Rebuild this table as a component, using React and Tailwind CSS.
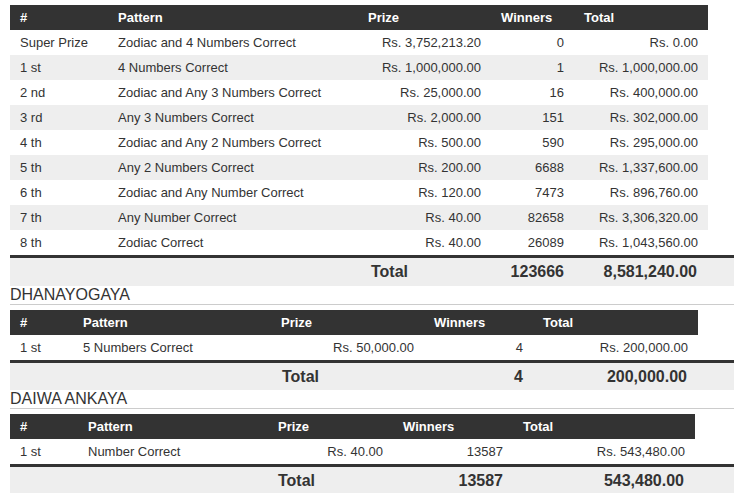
const t1 = [
  ['Super Prize', 'Zodiac and 4 Numbers Correct', 'Rs. 3,752,213.20', '0', 'Rs. 0.00'],
  ['1 st', '4 Numbers Correct', 'Rs. 1,000,000.00', '1', 'Rs. 1,000,000.00'],
  ['2 nd', 'Zodiac and Any 3 Numbers Correct', 'Rs. 25,000.00', '16', 'Rs. 400,000.00'],
  ['3 rd', 'Any 3 Numbers Correct', 'Rs. 2,000.00', '151', 'Rs. 302,000.00'],
  ['4 th', 'Zodiac and Any 2 Numbers Correct', 'Rs. 500.00', '590', 'Rs. 295,000.00'],
  ['5 th', 'Any 2 Numbers Correct', 'Rs. 200.00', '6688', 'Rs. 1,337,600.00'],
  ['6 th', 'Zodiac and Any Number Correct', 'Rs. 120.00', '7473', 'Rs. 896,760.00'],
  ['7 th', 'Any Number Correct', 'Rs. 40.00', '82658', 'Rs. 3,306,320.00'],
  ['8 th', 'Zodiac Correct', 'Rs. 40.00', '26089', 'Rs. 1,043,560.00'],
]

const t2 = [['1 st', '5 Numbers Correct', 'Rs. 50,000.00', '4', 'Rs. 200,000.00']]
const t3 = [['1 st', 'Number Correct', 'Rs. 40.00', '13587', 'Rs. 543,480.00']]

const heads = ['#', 'Pattern', 'Prize', 'Winners', 'Total']

function PrizeTable({ cols, width, rows }) {
  return (
    <div className={width}>
      <div className={`grid ${cols} h-[25px] items-center bg-[#333] text-[13px] font-bold text-white`}>
        {heads.map((h) => (
          <div key={h} className="pl-[10px]">{h}</div>
        ))}
      </div>
      {rows.map((r, i) => (
        <div
          key={i}
          className={`grid ${cols} h-[25px] items-center text-[13px] text-[#333] ${i % 2 ? 'bg-[#eee]' : 'bg-white'}`}
        >
          <div className="pl-[10px]">{r[0]}</div>
          <div className="pl-[10px]">{r[1]}</div>
          <div className="pr-[10px] text-right">{r[2]}</div>
          <div className="pr-[10px] text-right">{r[3]}</div>
          <div className="pr-[10px] text-right">{r[4]}</div>
        </div>
      ))}
    </div>
  )
}

function Footer({ lead, label, winners, total, h }) {
  return (
    <div className={`flex ${h} w-[724px] items-center border-t-[3px] border-[#333] bg-[#eee] text-[16px] font-bold text-[#333]`}>
      <div className={lead} />
      <div className={label.w}>Total</div>
      <div className={`${winners.w} text-right`}>{winners.v}</div>
      <div className={`${total.w} text-right`}>{total.v}</div>
    </div>
  )
}

function Heading({ children }) {
  return (
    <div className="mb-[5px] w-[724px] border-b border-[#ccc] text-[16px] leading-[18px] text-[#333]">
      {children}
    </div>
  )
}

export default function App() {
  return (
    <div className="min-h-[493px] bg-white px-[10px] pt-[5px] font-['Liberation_Sans',Arial,sans-serif]">
      <PrizeTable cols="grid-cols-[98px_250px_133px_83px_134px]" width="w-[698px]" rows={t1} />
      <Footer
        h="h-[31px]"
        lead="w-[361px]"
        label={{ w: 'w-[120px]' }}
        winners={{ w: 'w-[73px]', v: '123666' }}
        total={{ w: 'w-[133px]', v: '8,581,240.00' }}
      />

      <Heading>DHANAYOGAYA</Heading>
      <PrizeTable cols="grid-cols-[63px_198px_153px_109px_165px]" width="w-[688px]" rows={t2} />
      <Footer
        h="h-[30px]"
        lead="w-[272px]"
        label={{ w: 'w-[180px]' }}
        winners={{ w: 'w-[61px]', v: '4' }}
        total={{ w: 'w-[164px]', v: '200,000.00' }}
      />

      <Heading>DAIWA ANKAYA</Heading>
      <PrizeTable cols="grid-cols-[68px_190px_125px_120px_182px]" width="w-[685px]" rows={t3} />
      <Footer
        h="h-[30px]"
        lead="w-[268px]"
        label={{ w: 'w-[150px]' }}
        winners={{ w: 'w-[75px]', v: '13587' }}
        total={{ w: 'w-[181px]', v: '543,480.00' }}
      />
    </div>
  )
}
